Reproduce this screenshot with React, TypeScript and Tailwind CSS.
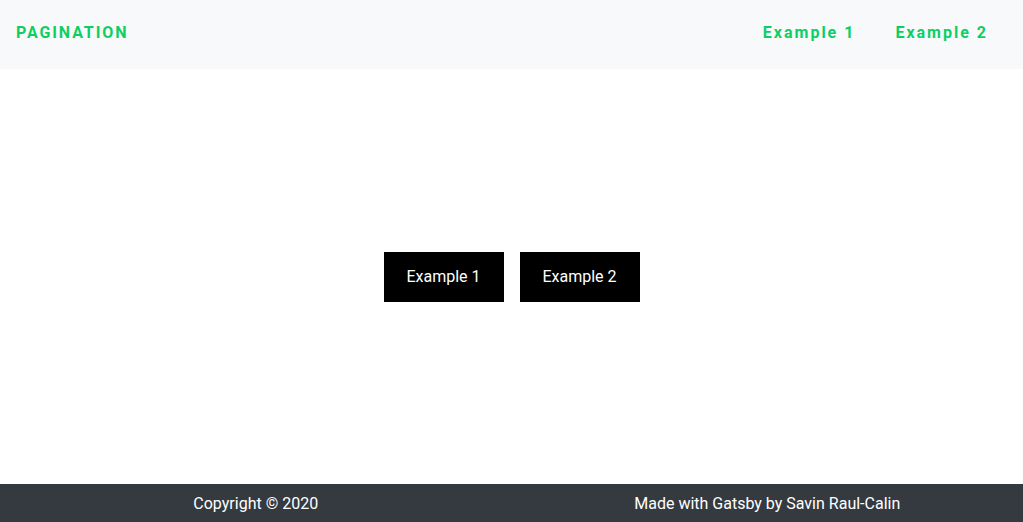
export default function App() {
  return (
    <div className="flex min-h-[522px] flex-col bg-white font-['Roboto',sans-serif]">
      {/* Header */}
      <header className="flex h-[69px] items-center justify-between bg-[#f8f9fa] pb-1 pl-4 pr-[15px]">
        <a className="text-base font-bold uppercase tracking-[1.9px] text-[#0ccf63]">Pagination</a>
        <nav className="flex items-center">
          <a className="px-5 text-base font-bold tracking-[2px] text-[#0ccf63]">Example 1</a>
          <a className="px-5 text-base font-bold tracking-[2px] text-[#0ccf63]">Example 2</a>
        </nav>
      </header>

      {/* Main */}
      <main className="flex flex-1 items-center justify-center gap-4">
        <button type="button" className="h-[50px] w-[120px] bg-black text-base text-white">
          Example 1
        </button>
        <button type="button" className="h-[50px] w-[120px] bg-black text-base text-white">
          Example 2
        </button>
      </main>

      {/* Footer */}
      <footer className="grid h-[38px] grid-cols-2 items-center bg-[#343a40] pt-0.5 text-base text-white">
        <p className="text-center">Copyright © 2020</p>
        <p className="text-center">Made with Gatsby by Savin Raul-Calin</p>
      </footer>
    </div>
  );
}
